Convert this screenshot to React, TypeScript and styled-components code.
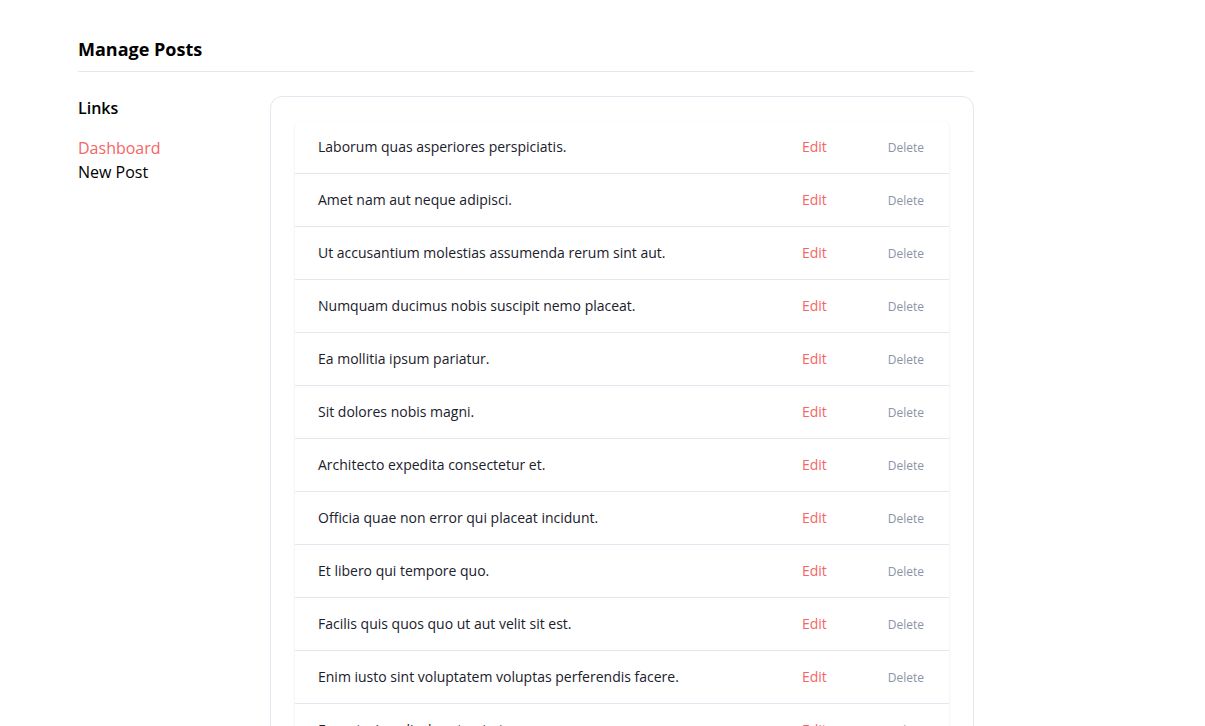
import React from "react";
import styled, { createGlobalStyle } from "styled-components";

interface Post {
  id: number;
  title: string;
}

const posts: Post[] = [
  { id: 1, title: "Laborum quas asperiores perspiciatis." },
  { id: 2, title: "Amet nam aut neque adipisci." },
  { id: 3, title: "Ut accusantium molestias assumenda rerum sint aut." },
  { id: 4, title: "Numquam ducimus nobis suscipit nemo placeat." },
  { id: 5, title: "Ea mollitia ipsum pariatur." },
  { id: 6, title: "Sit dolores nobis magni." },
  { id: 7, title: "Architecto expedita consectetur et." },
  { id: 8, title: "Officia quae non error qui placeat incidunt." },
  { id: 9, title: "Et libero qui tempore quo." },
  { id: 10, title: "Facilis quis quos quo ut aut velit sit est." },
  { id: 11, title: "Enim iusto sint voluptatem voluptas perferendis facere." },
  { id: 12, title: "Excepturi explicabo ut aut et." },
];

const GlobalStyle = createGlobalStyle`
  * {
    box-sizing: border-box;
  }
  body {
    margin: 0;
    background: #fff;
    font-family: "Open Sans", "Noto Sans", sans-serif;
    color: #1a202c;
  }
`;

const App: React.FC = () => {
  return (
    <Page>
      <GlobalStyle />
      <Header>
        <Title>Manage Posts</Title>
      </Header>
      <Body>
        <Sidebar>
          <SidebarTitle>Links</SidebarTitle>
          <NavList>
            <NavLink active>Dashboard</NavLink>
            <NavLink>New Post</NavLink>
          </NavList>
        </Sidebar>
        <Card>
          <Table>
            {posts.map((post) => (
              <Row key={post.id}>
                <PostTitle>{post.title}</PostTitle>
                <EditLink>Edit</EditLink>
                <DeleteButton>Delete</DeleteButton>
              </Row>
            ))}
          </Table>
        </Card>
      </Body>
    </Page>
  );
};

const Page = styled.div`
  width: 974px;
  padding: 35px 0 0 78px;
`;

const Header = styled.header`
  border-bottom: 1px solid #e2e8f0;
  padding-bottom: 8px;
`;

const Title = styled.h1`
  margin: 0;
  font: 700 18px/28px "Open Sans", sans-serif;
  color: #000;
`;

const Body = styled.div`
  display: flex;
  margin-top: 24px;
`;

const Sidebar = styled.aside`
  width: 192px;
  flex-shrink: 0;
`;

const SidebarTitle = styled.h2`
  margin: 0;
  font: 600 16px/24px "Open Sans", sans-serif;
  color: #000;
`;

const NavList = styled.nav`
  display: flex;
  flex-direction: column;
  margin-top: 16px;
`;

const NavLink = styled.a<{ active?: boolean }>`
  font: 400 16px/24px "Open Sans", sans-serif;
  color: ${(p) => (p.active ? "#f56565" : "#000")};
  text-decoration: none;
  cursor: pointer;
`;

const Card = styled.main`
  flex: 1;
  border: 1px solid #e2e8f0;
  border-radius: 12px;
  padding: 24px;
`;

const Table = styled.div`
  border-radius: 6px;
  box-shadow: 0 1px 3px rgba(0, 0, 0, 0.08), 0 1px 2px rgba(0, 0, 0, 0.04);
  background: #fff;
`;

const Row = styled.div`
  display: flex;
  align-items: center;
  height: 53px;
  padding: 0 25px 0 23px;
  border-bottom: 1px solid #e2e8f0;
`;

const PostTitle = styled.span`
  flex: 1;
  font: 400 14px/20px "Open Sans", sans-serif;
  color: #1a202c;
`;

const EditLink = styled.a`
  font: 400 14px/20px "Open Sans", sans-serif;
  color: #f56565;
  margin-right: 61px;
  cursor: pointer;
`;

const DeleteButton = styled.button`
  border: none;
  background: none;
  padding: 2px 0 0;
  font: 400 12px/20px "Open Sans", sans-serif;
  color: #8a94a6;
  cursor: pointer;
`;

export default App;
